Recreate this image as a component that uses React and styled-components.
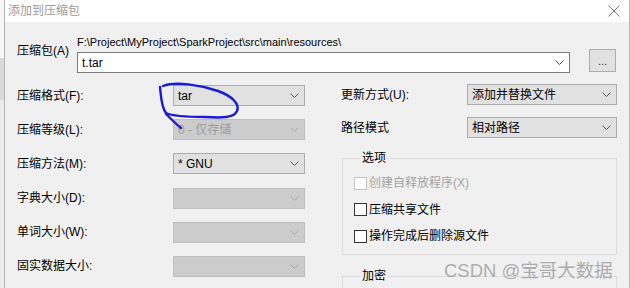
import React from "react";
import styled, { createGlobalStyle, css } from "styled-components";

const GlobalStyle = createGlobalStyle`
  html, body { margin: 0; padding: 0; background: #ffffff; }
  body {
    width: 630px;
    height: 288px;
    overflow: hidden;
    font-family: "Liberation Sans", "Noto Sans CJK SC", sans-serif;
    font-size: 12px;
    color: #000;
  }
  * { box-sizing: border-box; }
`;

const Page = styled.div`
  position: relative;
  display: flex;
  width: 630px;
  height: 288px;
  overflow: hidden;
`;

const BackStrip = styled.div`
  width: 4px;
  flex: none;
  background: linear-gradient(#f7f7f7 0, #f7f7f7 58px, #d9d9d9 58px, #d9d9d9 100px, #ececec 100px);
`;

const Frame = styled.div`
  flex: 1;
  display: flex;
  flex-direction: column;
  border-left: 1px solid #b4b4b4;
  border-right: 1px solid #b9b9b9;
  background: #f0f0f0;
`;

const TitleBar = styled.div`
  height: 22px;
  flex: none;
  background: #ffffff;
  display: flex;
  align-items: center;
  justify-content: space-between;
  padding: 0 9px 0 3px;
`;

const Title = styled.span`
  color: #9b9b9b;
  font-size: 12px;
  line-height: 16px;
  margin-top: -1px;
`;

const Body = styled.div`
  flex: 1;
  padding: 13px 12px 0 12px;
  display: flex;
  flex-direction: column;
`;

const ArchiveGrid = styled.div`
  display: grid;
  grid-template-columns: 60px 493px 19px 27px;
  grid-template-rows: 16px 21px;
  align-items: center;
`;

const ArchiveLabel = styled.span`
  grid-row: 1 / 3;
  grid-column: 1;
  line-height: 16px;
  margin-bottom: 6px;
`;

const PathText = styled.span`
  grid-row: 1;
  grid-column: 2 / 5;
  font-size: 11px;
  line-height: 14px;
  white-space: nowrap;
  margin-top: -2px;
`;

const comboVariants = {
  white: css`
    background: #ffffff;
    border-color: #7a7a7a;
    color: #000;
  `,
  normal: css`
    background: #e1e1e1;
    border-color: #adadad;
    color: #000;
  `,
  disabled: css`
    background: #cccccc;
    border-color: #bfbfbf;
    color: #9c9c9c;
  `,
};

const Combo = styled.div`
  height: 21px;
  border: 1px solid;
  display: flex;
  align-items: center;
  justify-content: space-between;
  padding: 0 5px 0 4px;
  line-height: 16px;
  white-space: nowrap;
  ${(p) => comboVariants[p.$variant || "normal"]}
`;

const ArchiveCombo = styled(Combo)`
  grid-row: 2;
  grid-column: 2;
  margin-top: 2px;
`;

const BrowseButton = styled.div`
  grid-row: 2;
  grid-column: 4;
  height: 23px;
  align-self: end;
  background: #e1e1e1;
  border: 1px solid #adadad;
  display: flex;
  align-items: center;
  justify-content: center;
  font-size: 11px;
  line-height: 10px;
  color: #3a1a4a;
`;

const Columns = styled.div`
  margin-top: 13px;
  display: grid;
  grid-template-columns: 288px 276px;
  column-gap: 36px;
  align-items: start;
`;

const LeftForm = styled.div`
  display: grid;
  grid-template-columns: 156px 132px;
  grid-auto-rows: 21px;
  row-gap: 13.2px;
  align-items: center;
`;

const RightForm = styled.div`
  display: flex;
  flex-direction: column;
  margin-top: -1px;
`;

const RightGrid = styled.div`
  display: grid;
  grid-template-columns: 126px 150px;
  grid-auto-rows: 21px;
  row-gap: 12px;
  align-items: center;
`;

const Label = styled.span`
  line-height: 16px;
  white-space: nowrap;
`;

const GroupBox = styled.fieldset`
  margin: ${(p) => p.$top}px 0 0 1px;
  padding: 9px 0 ${(p) => p.$bottom}px 11px;
  border: 1px solid #dcdcdc;
  min-width: 0;
  display: flex;
  flex-direction: column;
  gap: 10.5px;
`;

const Legend = styled.legend`
  margin-left: 7px;
  padding: 0 2px 0 1px;
  line-height: 16px;
  font-size: 12px;
`;

const CheckRow = styled.label`
  display: flex;
  align-items: center;
  gap: 2px;
  height: 16px;
  line-height: 16px;
  color: ${(p) => (p.$disabled ? "#a3a3a3" : "#000")};
`;

const Box = styled.span`
  width: 13px;
  height: 13px;
  flex: none;
  background: #ffffff;
  border: 1px solid ${(p) => (p.$disabled ? "#c4c4c4" : "#333333")};
`;

const Watermark = styled.div`
  position: absolute;
  left: 444px;
  top: 260px;
  font-family: "Liberation Sans", "Noto Sans CJK SC", sans-serif;
  font-size: 18.5px;
  line-height: 22px;
  color: rgba(160, 160, 160, 0.85);
  white-space: nowrap;
  pointer-events: none;
`;

const Overlay = styled.svg`
  position: absolute;
  left: 0;
  top: 0;
  pointer-events: none;
`;

const Chevron = ({ color = "#555" }) => (
  <svg width="9" height="5" viewBox="0 0 9 5" style={{ flex: "none" }}>
    <path d="M0.5 0.5 L4.5 4.5 L8.5 0.5" fill="none" stroke={color} strokeWidth="1" />
  </svg>
);

const Close = () => (
  <svg width="12" height="12" viewBox="0 0 12 12">
    <path d="M0.5 0.5 L11.5 11.5 M11.5 0.5 L0.5 11.5" stroke="#7a7a7a" strokeWidth="1" fill="none" />
  </svg>
);

const Select = ({ variant = "normal", children }) => (
  <Combo $variant={variant}>
    <span>{children}</span>
    <Chevron color={variant === "disabled" ? "#a8a8a8" : "#555"} />
  </Combo>
);

const leftRows = [
  { label: "压缩格式(F):", value: "tar" },
  { label: "压缩等级(L):", value: "0 - 仅存储", disabled: true },
  { label: "压缩方法(M):", value: "* GNU" },
  { label: "字典大小(D):", value: "", disabled: true },
  { label: "单词大小(W):", value: "", disabled: true },
  { label: "固实数据大小:", value: "", disabled: true },
];

const options = [
  { text: "创建自释放程序(X)", disabled: true },
  { text: "压缩共享文件" },
  { text: "操作完成后删除源文件" },
];

export default function App() {
  return (
    <>
      <GlobalStyle />
      <Page>
        <BackStrip />
        <Frame>
          <TitleBar>
            <Title>添加到压缩包</Title>
            <Close />
          </TitleBar>
          <Body>
            <ArchiveGrid>
              <ArchiveLabel>压缩包(A)</ArchiveLabel>
              <PathText>F:\Project\MyProject\SparkProject\src\main\resources\</PathText>
              <ArchiveCombo $variant="white">
                <span>t.tar</span>
                <Chevron color="#444" />
              </ArchiveCombo>
              <BrowseButton>...</BrowseButton>
            </ArchiveGrid>
            <Columns>
              <LeftForm>
                {leftRows.map((r) => (
                  <React.Fragment key={r.label}>
                    <Label>{r.label}</Label>
                    <Select variant={r.disabled ? "disabled" : "normal"}>{r.value}</Select>
                  </React.Fragment>
                ))}
              </LeftForm>
              <RightForm>
                <RightGrid>
                  <Label>更新方式(U):</Label>
                  <Select>添加并替换文件</Select>
                  <Label>路径模式</Label>
                  <Select>相对路径</Select>
                </RightGrid>
                <GroupBox $top={12} $bottom={10}>
                  <Legend>选项</Legend>
                  {options.map((o) => (
                    <CheckRow key={o.text} $disabled={o.disabled}>
                      <Box $disabled={o.disabled} />
                      {o.text}
                    </CheckRow>
                  ))}
                </GroupBox>
                <GroupBox $top={13} $bottom={20}>
                  <Legend>加密</Legend>
                </GroupBox>
              </RightForm>
            </Columns>
          </Body>
        </Frame>
        <Watermark>CSDN @宝哥大数据</Watermark>
        <Overlay width="630" height="288" viewBox="0 0 630 288">
          <path
            d="M163 86 C 176 81, 200 85, 218 91 C 232 96, 240 104, 237 111 C 234 118, 222 118, 205 117 C 188 117, 172 116, 166 113 C 161 107, 161 95, 160 87"
            fill="none"
            stroke="#1b1bd6"
            strokeWidth="2.4"
            strokeLinecap="round"
          />
          <path d="M166 114 C 171 119, 176 124, 181 128" fill="none" stroke="#1b1bd6" strokeWidth="2.4" strokeLinecap="round" />
        </Overlay>
      </Page>
    </>
  );
}
